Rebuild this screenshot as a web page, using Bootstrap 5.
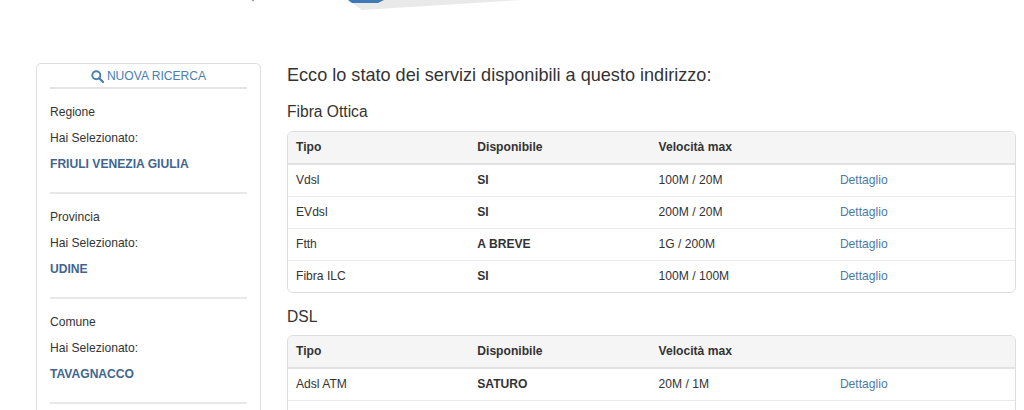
<!DOCTYPE html>
<html lang="it">
<head>
    <meta charset="UTF-8">
    <meta name="viewport" content="width=device-width, initial-scale=1.0">
    <title>Stato dei servizi</title>
    <link href="https://cdn.jsdelivr.net/npm/bootstrap@5.3.0/dist/css/bootstrap.min.css" rel="stylesheet">
    <style>
        html, body {
            height: 410px;
            overflow: hidden;
        }
        body {
            font-family: "Liberation Sans", Arial, sans-serif;
            font-size: 12.1px;
            color: #333;
            background: #fff;
        }
        .top-logo {
            height: 63px;
        }
        .top-logo svg {
            display: block;
        }
        .page-wrap {
            padding: 0 8px 0 36px;
            gap: 26px;
        }
        .side-box {
            width: 225px;
            flex: none;
            border: 1px solid #ddd;
            border-radius: 5px;
            padding: 0 13px;
            min-height: 420px;
        }
        .side-title {
            color: #4a80b0;
            height: 25px;
            padding-top: 1px;
            gap: 3px;
            border-bottom: 2px solid #e4e4e4;
        }
        .side-group {
            height: 105px;
            padding-top: 10px;
            border-bottom: 2px solid #e8e8e8;
            line-height: 26px;
        }
        .side-value {
            color: #41658f;
            font-weight: 700;
        }
        .main-col {
            min-width: 0;
        }
        .main-title {
            font-size: 18.1px;
            font-weight: 400;
            line-height: 24px;
            margin: 0 0 13px;
            color: #333;
        }
        .section-title {
            font-size: 15.6px;
            font-weight: 400;
            line-height: 24px;
            margin: 0 0 7px;
            color: #333;
        }
        .table-box {
            border: 1px solid #ddd;
            border-radius: 6px;
            overflow: hidden;
            margin-bottom: 12px;
        }
        .table-box + .section-title {
            margin-bottom: 6px;
        }
        .svc-table {
            table-layout: fixed;
            margin: 0;
            font-size: 12.1px;
        }
        .svc-table th, .svc-table td {
            padding: 0 8px;
            height: 32px;
            vertical-align: middle;
            color: #333;
            border-bottom: 1px solid #e9e9e9;
        }
        .svc-table th {
            background: #f5f5f5;
            border-bottom: 2px solid #e2e2e2;
            width: 181.3px;
        }
        .svc-table th:last-child {
            width: auto;
        }
        .svc-table tbody tr:last-child td {
            border-bottom: 0;
        }
        .svc-table a {
            color: #4a7ba6;
            text-decoration: none;
        }
    </style>
</head>
<body>
    <div class="top-logo">
        <svg width="1024" height="12" viewBox="0 0 1024 12">
            <polygon points="362,10 520,0 348,0" fill="#e9e9ea"/>
            <polygon points="348,0 384,0 378,3 352,3" fill="#3d78b8"/>
            <circle cx="253" cy="0" r="1.2" fill="#9a9a9a"/>
        </svg>
    </div>

    <div class="d-flex page-wrap">
        <!-- Sidebar -->
        <div class="side-box">
            <div class="side-title d-flex align-items-center justify-content-center">
                <svg width="13" height="13" viewBox="0 0 13 13">
                    <circle cx="5.3" cy="5.3" r="4" fill="none" stroke="#4a80b0" stroke-width="1.9"/>
                    <line x1="8.3" y1="8.3" x2="12" y2="12" stroke="#4a80b0" stroke-width="2.3" stroke-linecap="round"/>
                </svg>
                <span>NUOVA RICERCA</span>
            </div>
            <div class="side-group">
                <div>Regione</div>
                <div>Hai Selezionato:</div>
                <div class="side-value">FRIULI VENEZIA GIULIA</div>
            </div>
            <div class="side-group">
                <div>Provincia</div>
                <div>Hai Selezionato:</div>
                <div class="side-value">UDINE</div>
            </div>
            <div class="side-group">
                <div>Comune</div>
                <div>Hai Selezionato:</div>
                <div class="side-value">TAVAGNACCO</div>
            </div>
        </div>

        <!-- Services -->
        <div class="main-col flex-grow-1">
            <h1 class="main-title">Ecco lo stato dei servizi disponibili a questo indirizzo:</h1>

            <h2 class="section-title">Fibra Ottica</h2>
            <div class="table-box">
                <table class="table svc-table">
                    <thead>
                        <tr><th>Tipo</th><th>Disponibile</th><th>Velocità max</th><th></th></tr>
                    </thead>
                    <tbody>
                        <tr><td>Vdsl</td><td><b>SI</b></td><td>100M / 20M</td><td><a href="#">Dettaglio</a></td></tr>
                        <tr><td>EVdsl</td><td><b>SI</b></td><td>200M / 20M</td><td><a href="#">Dettaglio</a></td></tr>
                        <tr><td>Ftth</td><td><b>A BREVE</b></td><td>1G / 200M</td><td><a href="#">Dettaglio</a></td></tr>
                        <tr><td>Fibra ILC</td><td><b>SI</b></td><td>100M / 100M</td><td><a href="#">Dettaglio</a></td></tr>
                    </tbody>
                </table>
            </div>

            <h2 class="section-title">DSL</h2>
            <div class="table-box">
                <table class="table svc-table">
                    <thead>
                        <tr><th>Tipo</th><th>Disponibile</th><th>Velocità max</th><th></th></tr>
                    </thead>
                    <tbody>
                        <tr><td>Adsl ATM</td><td><b>SATURO</b></td><td>20M / 1M</td><td><a href="#">Dettaglio</a></td></tr>
                        <tr><td>&nbsp;</td><td></td><td></td><td></td></tr>
                    </tbody>
                </table>
            </div>
        </div>
    </div>

    <script src="https://cdn.jsdelivr.net/npm/bootstrap@5.3.0/dist/js/bootstrap.bundle.min.js"></script>
</body>
</html>
